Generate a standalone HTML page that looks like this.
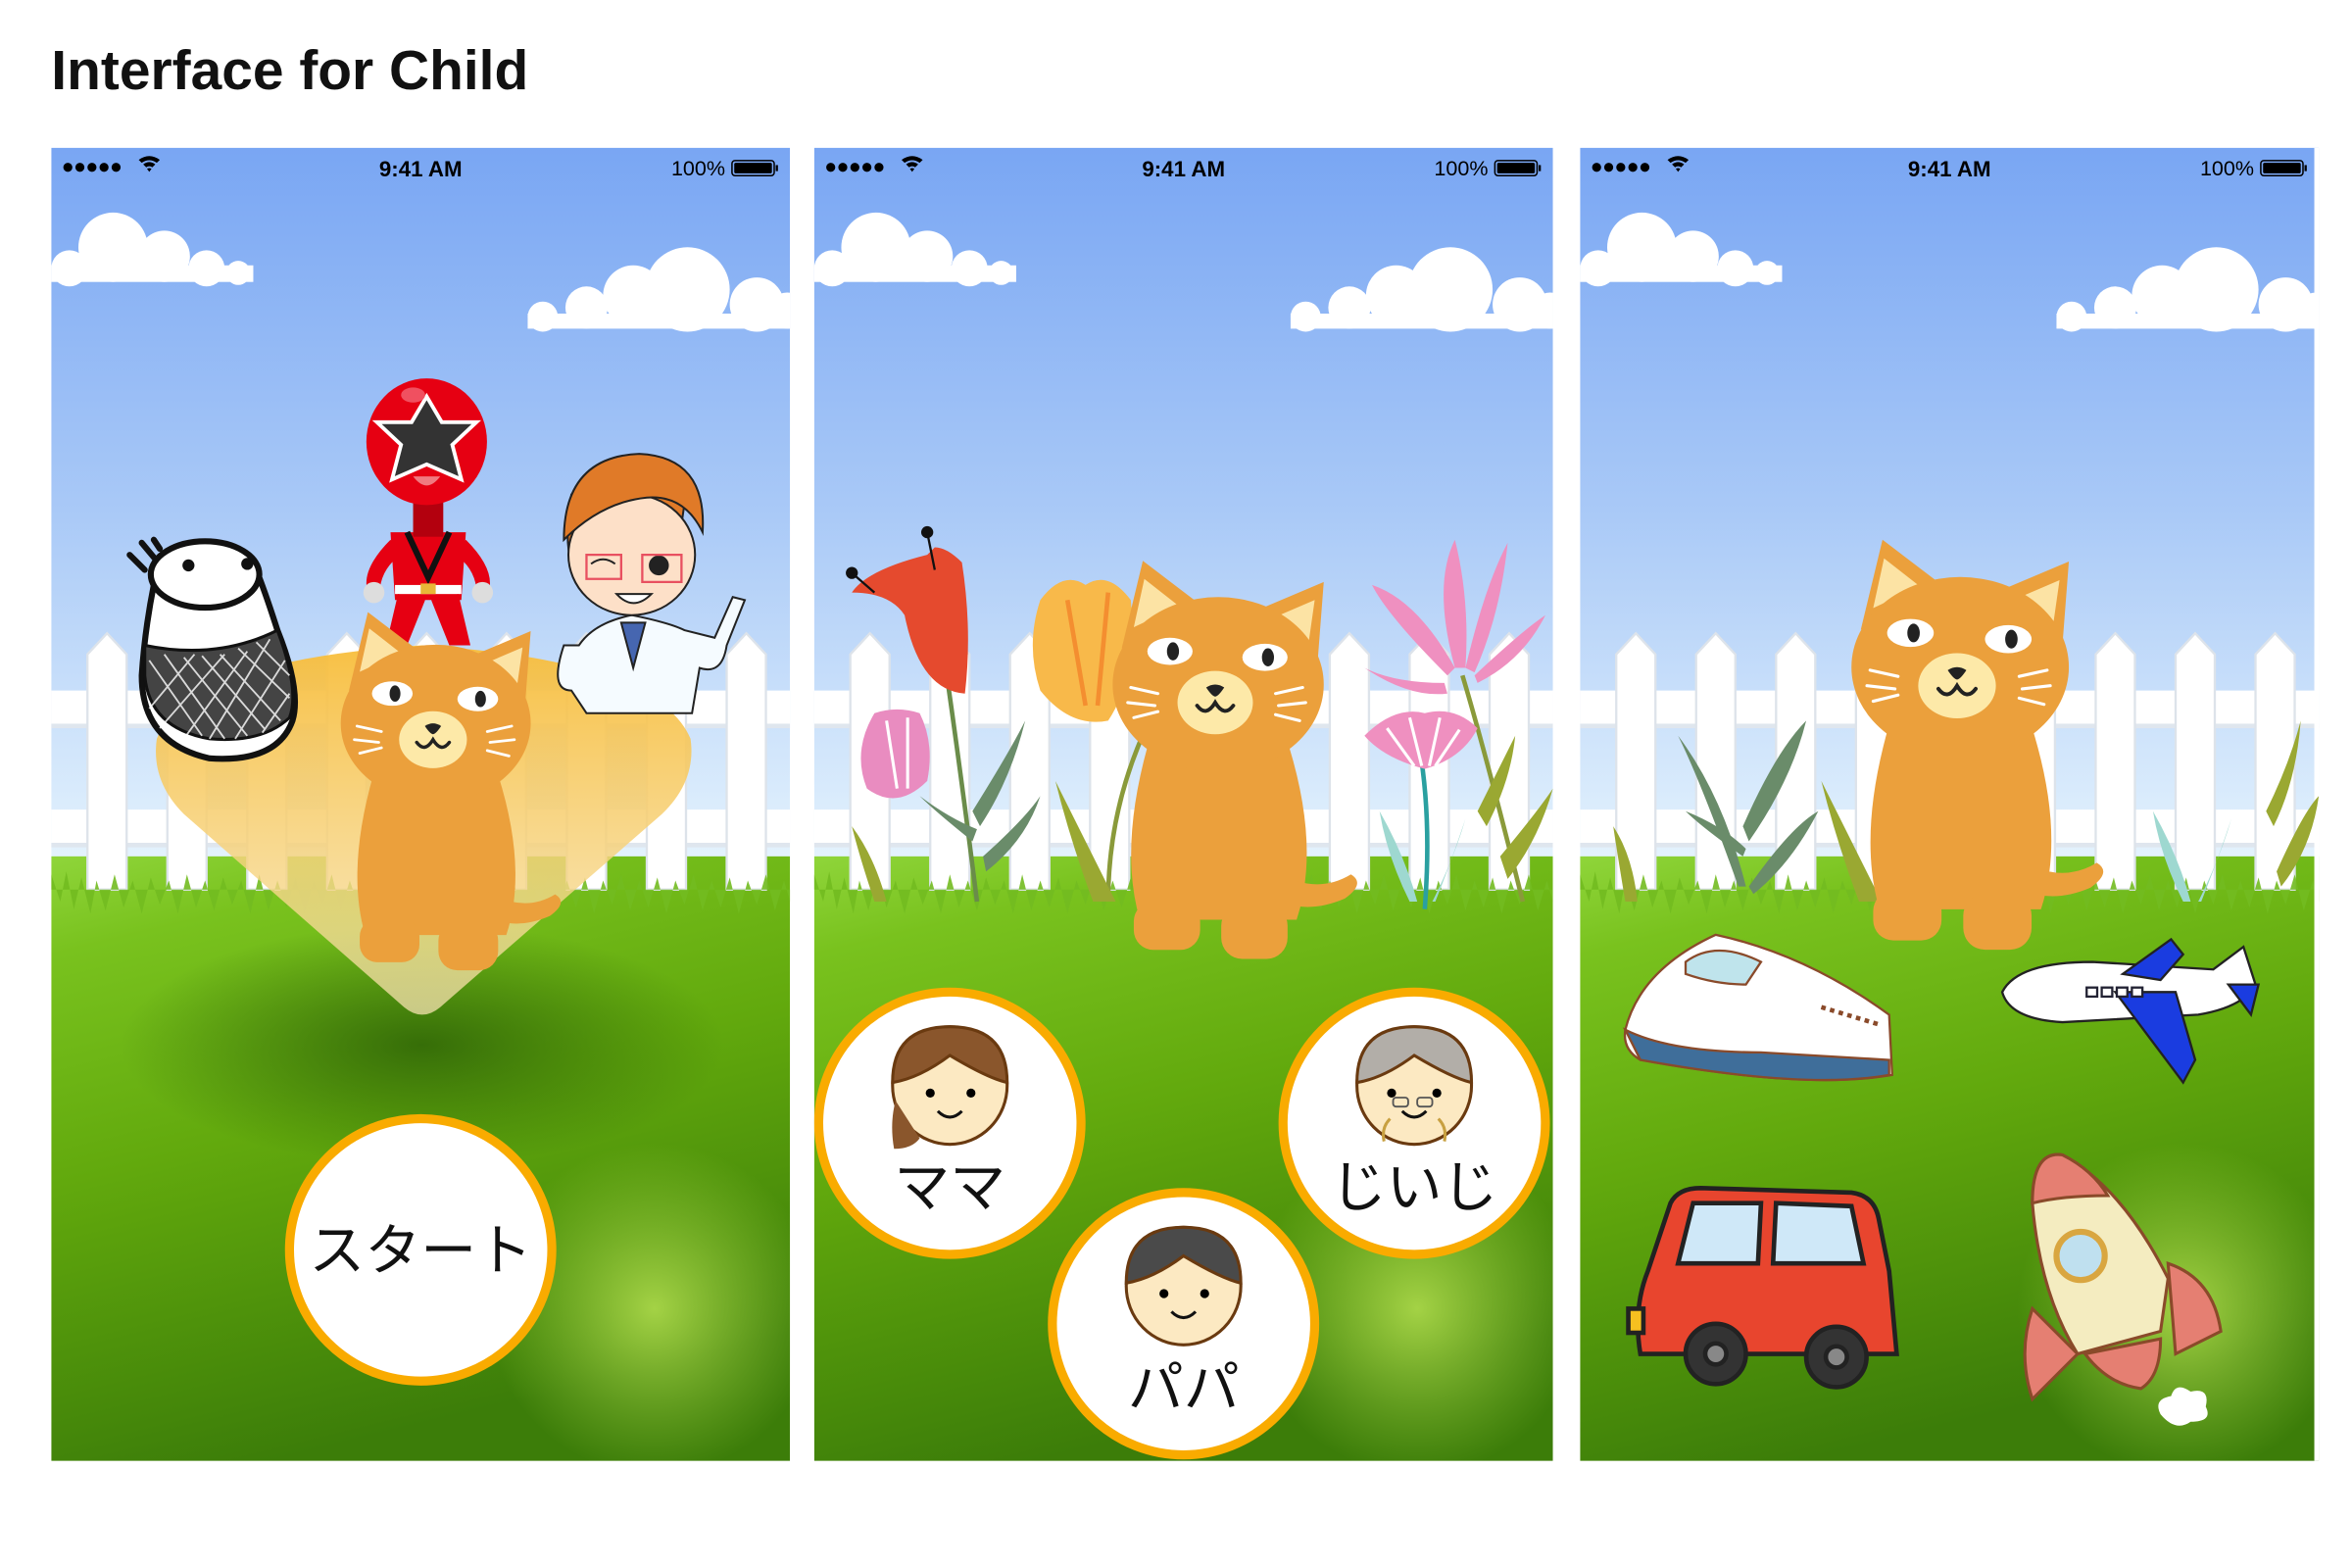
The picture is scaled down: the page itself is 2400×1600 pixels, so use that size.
<!DOCTYPE html>
<html><head><meta charset="utf-8"><style>
html,body{margin:0;padding:0;background:#fff;width:2400px;height:1600px;overflow:hidden}
svg{display:block}
text{font-family:"Liberation Sans","Noto Sans CJK JP",sans-serif}
</style></head><body>
<svg width="2400" height="1600" viewBox="0 0 1560 1040" xmlns="http://www.w3.org/2000/svg">
<defs>
<linearGradient id="sky" x1="0" y1="0" x2="0" y2="1">
<stop offset="0" stop-color="#79a6f3"/><stop offset="0.5" stop-color="#a9c9f7"/><stop offset="1" stop-color="#e6f4fd"/>
</linearGradient>
<linearGradient id="grass" x1="0" y1="0" x2="0.3" y2="1">
<stop offset="0" stop-color="#8fd53a"/><stop offset="0.15" stop-color="#79c21e"/><stop offset="0.5" stop-color="#62a90d"/><stop offset="1" stop-color="#3c7d09"/>
</linearGradient>
<radialGradient id="spot"><stop offset="0" stop-color="#b5e050" stop-opacity="0.85"/><stop offset="1" stop-color="#9fd040" stop-opacity="0"/></radialGradient>
<radialGradient id="shadow"><stop offset="0" stop-color="#2a5e06" stop-opacity="0.8"/><stop offset="1" stop-color="#2a5e06" stop-opacity="0"/></radialGradient>
<linearGradient id="beam" x1="0" y1="0" x2="0" y2="1">
<stop offset="0" stop-color="#f8bd3a" stop-opacity="0.95"/><stop offset="1" stop-color="#f6e3b0" stop-opacity="0.75"/>
</linearGradient>
<clipPath id="pc"><rect x="0" y="0" width="490" height="871"/></clipPath>

<g id="bg">
<rect x="0" y="0" width="490" height="480" fill="url(#sky)"/>
<g fill="#fff">
<circle cx="41" cy="66" r="23"/><circle cx="75" cy="72" r="17"/><circle cx="103" cy="80" r="12"/><circle cx="124" cy="83" r="8"/><circle cx="12" cy="80" r="12"/>
<rect x="0" y="78" width="134" height="11"/>
<circle cx="422" cy="94" r="28"/><circle cx="386" cy="98" r="20"/><circle cx="355" cy="106" r="14"/><circle cx="326" cy="112" r="10"/><circle cx="468" cy="104" r="18"/><circle cx="488" cy="108" r="12"/>
<rect x="316" y="110" width="174" height="10"/>
</g>
<rect x="0" y="470" width="490" height="401" fill="url(#grass)"/>
<circle cx="400" cy="770" r="110" fill="url(#spot)"/>
<g fill="#fff">
<rect x="0" y="360" width="490" height="24"/><rect x="0" y="439" width="490" height="24"/>
<rect x="0" y="382" width="490" height="3" fill="#dfe6ee"/><rect x="0" y="461" width="490" height="3" fill="#dfe6ee"/>
</g>
<g fill="#fff" stroke="#dde3ea" stroke-width="1.5">
<path d="M24 336 L37 322 L50 336 L50 492 L24 492Z"/><path d="M77 336 L90 322 L103 336 L103 492 L77 492Z"/><path d="M130 336 L143 322 L156 336 L156 492 L130 492Z"/><path d="M183 336 L196 322 L209 336 L209 492 L183 492Z"/><path d="M236 336 L249 322 L262 336 L262 492 L236 492Z"/><path d="M289 336 L302 322 L315 336 L315 492 L289 492Z"/><path d="M342 336 L355 322 L368 336 L368 492 L342 492Z"/><path d="M395 336 L408 322 L421 336 L421 492 L395 492Z"/><path d="M448 336 L461 322 L474 336 L474 492 L448 492Z"/>
</g>
<path d="M0 482 L6 500 L10 480 L15 505 L20 484 L26 508 L30 486 L36 506 L42 482 L48 504 L54 486 L60 508 L66 484 L72 502 L78 486 L84 508 L90 482 L96 504 L102 486 L108 506 L114 484 L120 502 L126 486 L132 508 L138 482 L144 506 L150 486 L156 504 L162 484 L168 508 L174 486 L180 502 L186 482 L192 506 L198 486 L204 504 L210 484 L216 508 L222 486 L228 502 L234 482 L240 506 L246 486 L252 504 L258 484 L264 508 L270 486 L276 502 L282 482 L288 506 L294 486 L300 504 L306 484 L312 508 L318 486 L324 502 L330 482 L336 506 L342 486 L348 504 L354 484 L360 508 L366 486 L372 502 L378 482 L384 506 L390 486 L396 504 L402 484 L408 508 L414 486 L420 502 L426 482 L432 506 L438 486 L444 504 L450 484 L456 508 L462 486 L468 502 L474 482 L480 506 L486 486 L490 500 L490 492 L0 492Z" fill="#72bb20" opacity="0.9"/>
<g fill="#000">
<circle cx="11" cy="13" r="3"/><circle cx="19" cy="13" r="3"/><circle cx="27" cy="13" r="3"/><circle cx="35" cy="13" r="3"/><circle cx="43" cy="13" r="3"/>
<path d="M58 8 Q65 3 72 8 L70 10 Q65 6.5 60 10Z M61 11 Q65 8 69 11 L67 13 Q65 11.5 63 13Z M63.5 14 L65 16 L66.5 14 Q65 13 63.5 14Z"/>
<text x="245" y="19" font-size="14.5" text-anchor="middle" font-weight="600">9:41 AM</text>
<text x="447" y="18.5" font-size="14" text-anchor="end">100%</text>
<rect x="451.5" y="8.5" width="28" height="10" rx="2" fill="none" stroke="#000" stroke-width="1"/>
<rect x="453" y="10" width="25" height="7" rx="1"/>
<rect x="480.5" y="11.5" width="1.5" height="4"/>
</g>
</g>

<g id="cat">
<path d="M20 0 L6 58 L62 32Z" fill="#eba03c"/><path d="M21 12 L14 44 L44 30Z" fill="#fce3a4"/>
<path d="M140 14 L88 36 L136 66Z" fill="#eba03c"/><path d="M134 26 L106 38 L130 54Z" fill="#fce3a4"/>
<path d="M24 120 Q4 190 18 238 L122 238 Q138 190 116 120Z" fill="#eba03c"/>
<path d="M108 206 Q135 222 158 208 Q168 214 154 224 Q126 236 104 222Z" fill="#eba03c"/>
<rect x="14" y="226" width="44" height="32" rx="13" fill="#eba03c"/><rect x="72" y="228" width="44" height="36" rx="14" fill="#eba03c"/>
<ellipse cx="70" cy="82" rx="70" ry="58" fill="#eba03c"/>
<ellipse cx="38" cy="60" rx="15" ry="9" fill="#fff"/><ellipse cx="40" cy="60" rx="4" ry="6" fill="#222"/>
<ellipse cx="101" cy="64" rx="15" ry="9" fill="#fff"/><ellipse cx="103" cy="64" rx="4" ry="6" fill="#222"/>
<ellipse cx="68" cy="94" rx="25" ry="21" fill="#fde9a8"/>
<path d="M62 84 Q68 80 74 84 Q70 90 68 90 Q66 90 62 84Z" fill="#222"/>
<path d="M56 96 Q62 104 68 94 Q74 104 80 96" fill="none" stroke="#222" stroke-width="2.5" stroke-linecap="round"/>
<g stroke="#fff" stroke-width="2" stroke-linecap="round"><path d="M12 84 L30 88 M10 94 L28 96 M14 104 L30 100 M108 88 L126 84 M110 96 L128 94 M108 102 L124 106"/></g>
</g>

<g id="ring"><circle r="87" fill="#fff" stroke="#f9ab00" stroke-width="6"/></g>
</defs>

<text x="34" y="59" font-size="37" font-weight="bold" fill="#111">Interface for Child</text>

<g transform="translate(34,98)" clip-path="url(#pc)">
<use href="#bg"/>
<ellipse cx="246" cy="595" rx="200" ry="80" fill="url(#shadow)"/>
<path d="M70 392 Q90 340 246 330 Q402 340 424 392 Q428 420 405 442 L258 570 Q246 580 234 570 L88 442 Q66 420 70 392Z" fill="url(#beam)"/>
<g stroke="#111" stroke-width="4" stroke-linecap="round">
<path d="M52 270 L62 280 M60 262 L70 274 M68 260 L72 266" />
<path d="M68 290 Q62 320 60 350 Q60 395 105 405 Q150 408 160 380 Q166 360 150 320 Q142 295 136 280 Z" fill="#fff"/>
<ellipse cx="102" cy="283" rx="36" ry="22" fill="#fff"/>
<path d="M62 330 Q110 340 150 320 Q165 360 158 378 Q140 395 105 392 Q65 385 62 350Z" fill="#444" stroke-width="2"/>
</g>
<g stroke="#fff" stroke-width="1.2" opacity="0.8"><path d="M65 340 L100 390 M75 336 L115 392 M88 338 L130 390 M100 337 L142 386 M112 336 L152 380 M124 332 L158 365 M136 328 L158 350 M65 372 L95 336 M72 385 L115 336 M88 392 L130 334 M105 392 L145 326 M122 392 L155 340 M140 388 L158 362"/></g>
<circle cx="91" cy="277" r="4" fill="#111"/><circle cx="130" cy="276" r="4" fill="#111"/>
<g>
<path d="M225 260 Q205 280 210 295 L218 292 Q220 278 232 270Z M275 260 Q295 280 290 295 L282 292 Q280 278 268 270Z" fill="#e60012"/>
<path d="M225 255 L275 255 L272 300 L228 300Z" fill="#e60012"/>
<path d="M236 255 L250 285 L264 255" fill="none" stroke="#111" stroke-width="4"/>
<rect x="228" y="290" width="44" height="6" fill="#fff"/><rect x="245" y="289" width="10" height="7" fill="#e8b838"/>
<path d="M230 296 L222 330 L236 330 L248 300Z M270 296 L278 330 L264 330 L252 300Z" fill="#e60012"/>
<circle cx="214" cy="295" r="7" fill="#ddd"/><circle cx="286" cy="295" r="7" fill="#ddd"/>
<rect x="240" y="230" width="20" height="28" fill="#b3000e"/>
<ellipse cx="249" cy="195" rx="40" ry="42" fill="#e60012"/>
<path d="M249 165 L259 182 L282 182 L266 197 L272 220 L249 210 L226 220 L232 197 L216 182 L239 182Z" fill="#333" stroke="#fff" stroke-width="2.5"/>
<path d="M240 218 Q249 230 258 218Z" fill="#f07a80"/>
<ellipse cx="240" cy="164" rx="8" ry="5" fill="#f05060"/>
</g>
<g stroke="#222" stroke-width="1.3">
<path d="M340 330 Q330 360 345 360 L355 375 L425 375 L430 345 Q445 350 448 330 L460 300 L452 298 L440 325 L420 320 Q410 315 385 310 Q360 315 350 330Z" fill="#f5fbff"/>
<path d="M378 315 L386 345 L394 315Z" fill="#4666b0"/>
<path d="M400 290 Q420 260 420 230 Q418 205 390 205 Q360 210 345 230 Q340 260 345 275Z" fill="#e07a28"/>
<ellipse cx="385" cy="270" rx="42" ry="40" fill="#fde0c8"/>
<path d="M340 260 Q340 205 390 203 Q435 205 432 255 Q420 230 395 232 Q365 235 340 260Z" fill="#e07a28"/>
<circle cx="403" cy="277" r="6" fill="#222"/>
<path d="M358 276 Q366 270 374 276" fill="none"/>
<path d="M375 296 Q386 308 398 296Z" fill="#fff"/>
</g>
<path d="M355 270 L378 270 L378 286 L355 286Z M392 270 L418 270 L418 288 L392 288Z" fill="none" stroke="#e85060" stroke-width="1.5"/>
<use href="#cat" transform="translate(192,308) scale(0.9)"/>
<g transform="translate(245,731)"><use href="#ring"/><text y="13" font-size="37" text-anchor="middle" fill="#111">スタート</text></g>
</g>

<g transform="translate(540,98)" clip-path="url(#pc)">
<use href="#bg"/>
<g fill="none" stroke-width="3">
<path d="M88 350 Q98 420 108 500" stroke="#6a8c4a"/>
<path d="M220 385 Q195 440 195 500" stroke="#8a9a3a"/>
<path d="M400 390 Q410 440 405 505" stroke="#2aa0a0"/>
<path d="M430 350 Q445 400 470 500" stroke="#8a9a3a"/>
</g>
<g fill="#6a8c6a"><path d="M105 440 Q130 400 140 380 Q130 420 110 450Z"/><path d="M105 460 Q80 440 70 430 Q90 445 108 452Z"/><path d="M112 470 Q140 445 150 430 Q140 460 114 480Z"/></g>
<g fill="#9aa832"><path d="M185 500 Q170 460 160 420 Q180 460 200 500Z"/><path d="M440 440 Q455 410 465 390 Q462 420 446 450Z"/><path d="M455 470 Q480 440 490 425 Q480 460 460 485Z"/><path d="M40 500 Q30 470 25 450 Q40 470 48 500Z"/></g>
<g fill="#9ed8d0"><path d="M395 500 Q380 470 375 440 Q392 470 400 500Z"/><path d="M410 500 Q425 470 432 445 Q422 475 412 500Z"/></g>
<path d="M75 270 Q35 280 25 295 Q50 295 60 310 Q70 360 100 362 Q105 320 98 275 Q88 265 80 265Z" fill="#e54a2e"/>
<circle cx="75" cy="255" r="4" fill="#111"/><circle cx="25" cy="282" r="4" fill="#111"/>
<path d="M75 255 L80 280 M25 282 L40 295" stroke="#111" stroke-width="1.5"/>
<path d="M40 375 Q25 400 35 425 Q55 440 75 420 Q80 395 70 375 Q55 370 40 375Z" fill="#e98cc0"/>
<path d="M48 380 L55 425 M62 378 L62 425" stroke="#fff" stroke-width="2"/>
<path d="M150 300 Q140 330 150 360 Q170 385 195 380 Q215 350 210 300 Q195 280 180 290 Q165 280 150 300Z" fill="#f8b94a"/>
<path d="M168 300 L180 370 M195 295 L188 370" stroke="#f48e30" stroke-width="3"/>
<g fill="#ef90c0"><path d="M420 350 Q380 310 370 290 Q400 300 425 345Z"/><path d="M425 345 Q410 290 425 260 Q435 300 432 345Z"/><path d="M432 345 Q445 290 460 262 Q455 310 438 348Z"/><path d="M438 350 Q470 320 485 310 Q470 340 440 355Z"/><path d="M418 355 Q385 355 365 345 Q395 365 420 362Z"/></g>
<path d="M365 390 Q385 370 405 375 Q425 370 440 385 Q430 405 405 412 Q378 405 365 390Z" fill="#ef90c0"/>
<path d="M380 385 L398 410 M395 378 L403 410 M415 378 L408 410 M428 386 L412 410" stroke="#fff" stroke-width="2"/>
<use href="#cat" transform="translate(198,274)"/>
<g transform="translate(90,647)"><use href="#ring"/>
<ellipse cx="0" cy="-25" rx="38" ry="39" fill="#fce9c2" stroke="#6a3a10" stroke-width="2"/>
<path d="M-38 -27 Q-38 -64 0 -64 Q38 -64 38 -27 Q25 -30 0 -45 Q-20 -30 -38 -27Z" fill="#8a562c" stroke="#6a3a10" stroke-width="2"/>
<path d="M-36 -15 Q-40 0 -37 17 Q-25 17 -20 10Z" fill="#8a562c"/>
<circle cx="-13" cy="-20" r="3"/><circle cx="14" cy="-20" r="3"/>
<path d="M-8 -8 Q0 0 8 -8" fill="none" stroke="#111" stroke-width="2"/>
<text y="55" font-size="37" text-anchor="middle" fill="#111">ママ</text></g>
<g transform="translate(398,647)"><use href="#ring"/>
<ellipse cx="0" cy="-25" rx="38" ry="39" fill="#fce9c2" stroke="#6a3a10" stroke-width="2"/>
<path d="M-38 -27 Q-38 -64 0 -64 Q38 -64 38 -27 Q25 -30 0 -45 Q-20 -30 -38 -27Z" fill="#b2aea8" stroke="#6a3a10" stroke-width="2"/>
<circle cx="-15" cy="-20" r="3"/><circle cx="15" cy="-20" r="3"/>
<rect x="-14" y="-17" width="10" height="6" rx="2" fill="none" stroke="#555" stroke-width="1.2"/><rect x="2" y="-17" width="10" height="6" rx="2" fill="none" stroke="#555" stroke-width="1.2"/>
<path d="M-16 -3 Q-22 3 -20 12 M16 -3 Q22 3 20 12" fill="none" stroke="#c8a040" stroke-width="2"/>
<path d="M-8 -8 Q0 0 8 -8" fill="none" stroke="#111" stroke-width="2"/>
<text y="55" font-size="37" text-anchor="middle" fill="#111">じいじ</text></g>
<g transform="translate(245,780)"><use href="#ring"/>
<ellipse cx="0" cy="-25" rx="38" ry="39" fill="#fce9c2" stroke="#6a3a10" stroke-width="2"/>
<path d="M-38 -27 Q-38 -64 0 -64 Q38 -64 38 -27 Q25 -30 0 -45 Q-20 -30 -38 -27Z" fill="#4a4a4a" stroke="#6a3a10" stroke-width="2"/>
<circle cx="-13" cy="-20" r="3"/><circle cx="14" cy="-20" r="3"/>
<path d="M-8 -8 Q0 0 8 -8" fill="none" stroke="#111" stroke-width="2"/>
<text y="55" font-size="37" text-anchor="middle" fill="#111">パパ</text></g>
</g>

<g transform="translate(1048,98)" clip-path="url(#pc)">
<use href="#bg"/>
<rect x="487" y="0" width="3" height="871" fill="#fff"/>
<g fill="#6a8c6a"><path d="M105 490 Q80 420 65 390 Q95 430 110 490Z"/><path d="M108 450 Q130 400 150 380 Q140 420 112 460Z"/><path d="M108 470 Q80 450 70 440 Q95 450 110 465Z"/><path d="M112 490 Q140 450 158 440 Q140 475 115 495Z"/></g>
<g fill="#9aa832"><path d="M185 500 Q170 460 160 420 Q180 460 200 500Z"/><path d="M455 440 Q470 410 478 380 Q475 420 460 450Z"/><path d="M462 480 Q480 440 490 430 Q485 465 465 490Z"/><path d="M30 500 Q25 470 22 450 Q35 470 38 500Z"/></g>
<g fill="#9ed8d0"><path d="M400 500 Q385 470 380 440 Q397 470 405 500Z"/><path d="M410 500 Q425 470 432 445 Q422 475 412 500Z"/></g>
<use href="#cat" transform="translate(180,260) scale(1.03)"/>
<g stroke="#8a4a2a" stroke-width="1.5">
<path d="M30 585 Q40 545 90 522 Q150 535 205 575 L207 615 Q150 625 40 605 Q28 598 30 585Z" fill="#fff"/>
<path d="M30 585 Q60 600 120 600 L205 605 L205 615 Q150 625 40 605Z" fill="#3f6e9a"/>
<path d="M70 540 Q90 525 120 540 L110 555 Q90 555 70 548Z" fill="#bfe4ec"/>
</g>
<path d="M160 570 L200 582" stroke="#8a4a2a" stroke-width="3" stroke-dasharray="3 3"/>
<g stroke="#222" stroke-width="1.5">
<path d="M280 560 Q290 540 340 540 L420 545 L440 530 L448 555 Q440 570 410 575 L320 580 Q285 578 280 560Z" fill="#fff"/>
<path d="M355 560 L400 620 L408 605 L395 560Z" fill="#1a3ce0"/>
<path d="M360 548 L392 525 L400 535 L385 552Z" fill="#1a3ce0"/>
<path d="M430 555 L450 555 L445 575 Z" fill="#1a3ce0"/>
</g>
<g fill="#fff" stroke="#223" stroke-width="1.5"><rect x="336" y="557" width="7" height="6"/><rect x="346" y="557" width="7" height="6"/><rect x="356" y="557" width="7" height="6"/><rect x="366" y="557" width="7" height="6"/></g>
<g stroke="#222" stroke-width="3">
<path d="M45 745 L60 700 Q65 690 80 690 L180 693 Q195 695 198 710 L205 745 L210 800 L40 800 Q35 770 45 745Z" fill="#e8452e"/>
<path d="M75 700 L120 700 L118 740 L65 740Z M130 700 L180 702 L188 740 L128 740Z" fill="#cfe8f8"/>
<circle cx="90" cy="800" r="20" fill="#333"/><circle cx="170" cy="802" r="20" fill="#333"/>
<circle cx="90" cy="800" r="7" fill="#888"/><circle cx="170" cy="802" r="7" fill="#888"/>
<rect x="32" y="770" width="10" height="16" fill="#f6c020"/>
</g>
<g stroke="#8a4a2a" stroke-width="2">
<path d="M300 700 Q300 665 320 668 Q360 690 390 750 L385 785 L330 800 Q305 760 300 700Z" fill="#f4ecc0"/>
<path d="M300 700 Q300 665 320 668 Q340 678 350 695 Q320 695 300 700Z" fill="#e57f72"/>
<circle cx="332" cy="735" r="16" fill="#bfe0ef" stroke="#d9a640" stroke-width="4"/>
<path d="M300 770 Q290 800 300 830 L330 800Z" fill="#e57f72"/>
<path d="M390 740 Q420 750 425 785 L395 800Z" fill="#e57f72"/>
<path d="M335 800 Q350 820 372 823 Q385 815 385 790Z" fill="#e57f72"/>
</g>
<path d="M385 840 Q380 830 392 828 Q395 818 405 825 Q418 822 415 835 Q420 845 405 845 Q395 852 385 840Z" fill="#fff"/>
</g>
</svg>
</body></html>
